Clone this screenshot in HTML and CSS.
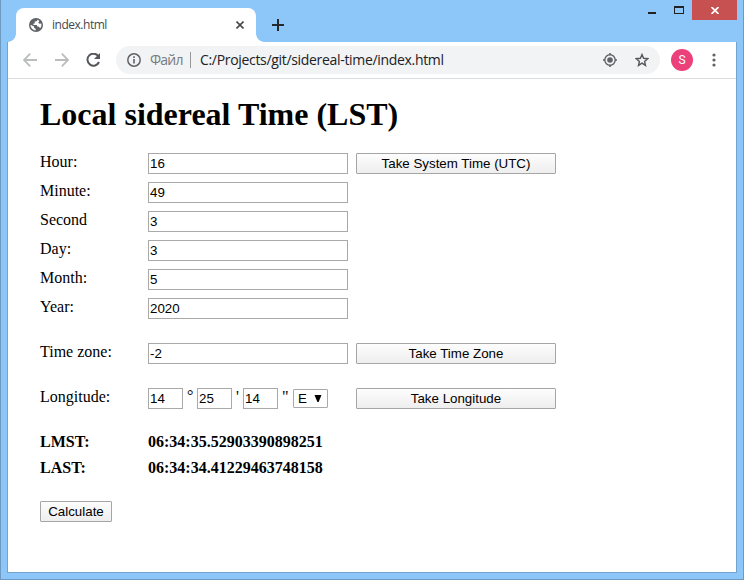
FILE: index.html
```html
<!DOCTYPE html>
<html lang="en">
<head>
<meta charset="utf-8">
<title>index.html</title>
<link rel="stylesheet" href="styles.css">
</head>
<body>
<div class="window">
  <header class="titlebar">
    <div class="tab">
      <svg class="globe" width="14" height="14" viewBox="0 0 14 14"><circle cx="7" cy="7" r="7" fill="#5f6368"/><path d="M8.8 1.7 7.6 3.2 5.7 3.6 5.8 5.3 4.3 5.7 4.5 7H7.8L8.4 8.5 10.2 8.8 11 10.4C12.3 9.2 12.7 7.2 12.3 5.5L10.7 5.8 9.2 4.8 10.4 3.1ZM1.5 6.7C1.5 9.8 3.7 12 6.7 12.4L6.6 10.8 5.2 10.1 5 8.5Z" fill="#fff"/></svg>
      <span class="tab-title">index.html</span>
      <svg class="tab-close" width="8" height="8" viewBox="0 0 8 8"><path d="M.5.5 7.5 7.5M7.5.5.5 7.5" stroke="#45494d" stroke-width="1.6"/></svg>
    </div>
    <svg class="new-tab" width="12" height="12" viewBox="0 0 12 12"><path d="M6 0V12M0 6H12" stroke="#24292d" stroke-width="2"/></svg>
    <div class="controls">
      <svg class="min" width="8" height="2"><path d="M0 0h8v2H0z" fill="#222"/></svg>
      <svg class="max" width="10" height="8"><path d="M0 0h10v8H0zM1 2v5h8V2z" fill="#222" fill-rule="evenodd"/></svg>
      <div class="close"><svg width="8" height="7" viewBox="0 0 8 7"><path d="M.5 0 7.5 7M7.5 0 .5 7" stroke="#fff" stroke-width="1.7"/></svg></div>
    </div>
  </header>
  <main class="client">
    <nav class="toolbar">
      <svg class="back" width="14" height="14" viewBox="0 0 14 14"><path d="M14 7H1M7.2.7.9 7l6.3 6.3" fill="none" stroke="#babcbe" stroke-width="1.8"/></svg>
      <svg class="forward" width="14" height="14" viewBox="0 0 14 14"><path d="M0 7h13M6.8.7 13.1 7l-6.3 6.3" fill="none" stroke="#babcbe" stroke-width="1.8"/></svg>
      <svg class="reload" width="15" height="14" viewBox="0 0 15 14"><path d="M12.5 3.4A6 6 0 1 0 13 9" fill="none" stroke="#54585d" stroke-width="2"/><path d="M14 0v6H8z" fill="#54585d"/></svg>
      <div class="address">
        <svg class="info" width="14" height="14" viewBox="0 0 14 14"><circle cx="7" cy="7" r="6.2" fill="none" stroke="#5f6368" stroke-width="1.5"/><path d="M6.2 6h1.6v4.6H6.2zM6.2 3.3h1.6v1.6H6.2z" fill="#5f6368"/></svg>
        <span class="scheme">Файл</span>
        <span class="separator"></span>
        <span class="url">C:/Projects/git/sidereal-time/index.html</span>
        <svg class="target" width="14" height="14" viewBox="0 0 14 14"><circle cx="7" cy="7" r="5.2" fill="none" stroke="#5f6368" stroke-width="1.4"/><circle cx="7" cy="7" r="2.8" fill="#5f6368"/><path d="M7 0v2M7 12v2M0 7h2M12 7h2" stroke="#5f6368" stroke-width="1.6"/></svg>
        <svg class="star" width="14" height="14" viewBox="0 0 14 14"><path d="m7 1.5 1.6 3.8 4.1.4-3.1 2.7.9 4L7 10.2l-3.5 2.2.9-4L1.3 5.7l4.1-.4z" fill="none" stroke="#54585d" stroke-width="1.4"/></svg>
      </div>
      <span class="avatar">S</span>
      <svg class="menu" width="4" height="14" viewBox="0 0 4 14"><g fill="#5f6368"><circle cx="2" cy="2" r="1.6"/><circle cx="2" cy="7" r="1.6"/><circle cx="2" cy="12" r="1.6"/></g></svg>
    </nav>
    <form class="page">
      <h1>Local sidereal Time (LST)</h1>
      <div class="row"><label>Hour:</label><input class="wide" value="16"><button type="button" class="take">Take System Time (UTC)</button></div>
      <div class="row"><label>Minute:</label><input class="wide" value="49"></div>
      <div class="row"><label>Second</label><input class="wide" value="3"></div>
      <div class="row"><label>Day:</label><input class="wide" value="3"></div>
      <div class="row"><label>Month:</label><input class="wide" value="5"></div>
      <div class="row"><label>Year:</label><input class="wide" value="2020"></div>
      <div class="row spaced"><label>Time zone:</label><input class="wide" value="-2"><button type="button" class="take">Take Time Zone</button></div>
      <div class="row spaced"><label>Longitude:</label>
        <div class="angle"><input value="14"><span class="degree">°</span><input value="25"><span class="arcmin">'</span><input value="14"><span class="arcsec">"</span><div class="select"><span>E</span><svg width="8" height="7" viewBox="0 0 8 7"><path d="M.5 0h7L4.6 7H3.4z"/></svg></div></div>
        <button type="button" class="take">Take Longitude</button></div>
      <div class="result first"><span>LMST:</span><span>06:34:35.52903390898251</span></div>
      <div class="result"><span>LAST:</span><span>06:34:34.41229463748158</span></div>
      <button type="button" class="calculate">Calculate</button>
    </form>
  </main>
</div>
</body>
</html>
```
FILE: styles.css
```css
* { box-sizing: border-box; }
body { margin: 0; overflow: hidden; }
svg { display: block; flex: none; }
.window {
  display: flex;
  flex-direction: column;
  width: 744px;
  height: 580px;
  padding: 0 6px 6px;
  background: #8dc6f9;
  border: 1px solid #6e9ac1;
  border-top: 0;
}
.titlebar { display: flex; height: 42px; flex: none; }
.tab {
  position: relative;
  display: flex;
  align-items: center;
  width: 240px;
  height: 34px;
  margin: 8px 0 0 9px;
  padding: 0 12px 0 13px;
  background: #fff;
  border-radius: 8px 8px 0 0;
}
.tab::before, .tab::after {
  content: "";
  position: absolute;
  bottom: 0;
  width: 8px;
  height: 8px;
}
.tab::before { left: -8px; background: radial-gradient(circle at 0 0, transparent 7.5px, #fff 8px); }
.tab::after { right: -8px; background: radial-gradient(circle at 100% 0, transparent 7.5px, #fff 8px); }
.tab-title {
  margin-left: 9px;
  font: 12px/16px "Open Sans", sans-serif;
  letter-spacing: -.48px;
  color: #45494d;
}
.tab-close { margin-left: auto; }
.new-tab { margin: 19px 0 0 16px; }
.controls { display: flex; margin-left: auto; }
.min { margin-top: 12px; }
.max { margin: 6px 8px 0 18px; }
.close {
  display: flex;
  align-items: center;
  justify-content: center;
  width: 45px;
  height: 20px;
  background: #c75050;
}
.client {
  flex: 1;
  background: #fff;
  border: 1px solid #74a3cc;
  border-top: 0;
}
.toolbar {
  display: flex;
  align-items: center;
  height: 37px;
  padding-left: 15px;
  border-bottom: 1px solid #dadce0;
}
.forward { margin-left: 18px; }
.reload { margin-left: 17px; }
.address {
  display: flex;
  align-items: center;
  width: 544px;
  height: 28px;
  margin-left: 15px;
  padding: 0 11px;
  background: #f1f3f4;
  border-radius: 14px;
  font: 14px/20px "Open Sans", sans-serif;
}
.scheme { width: 40px; margin-left: 9px; color: #777b80; letter-spacing: -.8px; }
.separator { width: 1px; height: 16px; background: #96999c; }
.url { margin-left: 9px; color: #202124; letter-spacing: -.32px; white-space: nowrap; }
.target { margin-left: auto; }
.star { margin-left: 18px; }
.avatar {
  width: 22px;
  height: 22px;
  margin-left: 11px;
  border-radius: 50%;
  background: #ec407a;
  color: #fff;
  font: 12px/22px Roboto, sans-serif;
  text-align: center;
}
.menu { margin-left: 19px; }
.page { margin: 0; padding: 17px 32px 0; font: 16px/18px "Liberation Serif", serif; color: #000; }
h1 { margin: 0 0 21px; font: bold 32px/36px "Liberation Serif", serif; }
.row { display: flex; height: 29px; }
.spaced { margin-top: 16px; }
.row label { width: 108px; }
input {
  width: 35px;
  height: 21px;
  margin: 0;
  padding: 1px;
  border: 1px solid #a9a9a9;
  border-radius: 0;
  background: #fff;
  color: #000;
  font: 13.333px "Liberation Sans", sans-serif;
}
.wide { width: 200px; }
button {
  height: 21px;
  margin: 0;
  padding: 0;
  border: 1px solid #a6a6a6;
  border-radius: 1px;
  background: linear-gradient(#fdfdfd, #eee);
  color: #000;
  font: 13.333px "Liberation Sans", sans-serif;
}
.take { width: 200px; margin-left: 8px; }
.angle { display: flex; width: 200px; }
.degree { width: 14px; padding-left: 4px; line-height: 16px; }
.arcmin { width: 11px; padding-left: 4px; }
.arcsec { width: 15px; padding-left: 4px; }
.select {
  display: flex;
  align-items: center;
  width: 35px;
  height: 19px;
  margin-top: 1px;
  padding: 0 5px 0 4px;
  border: 1px solid #a9a9a9;
  border-radius: 1px;
  font: 13.333px "Liberation Sans", sans-serif;
}
.select svg { margin-left: auto; }
.result { display: flex; height: 26px; font-weight: bold; }
.result span:first-child { width: 108px; }
.first { margin-top: 16px; }
.calculate { width: 72px; margin-top: 16px; display: block; }
```
